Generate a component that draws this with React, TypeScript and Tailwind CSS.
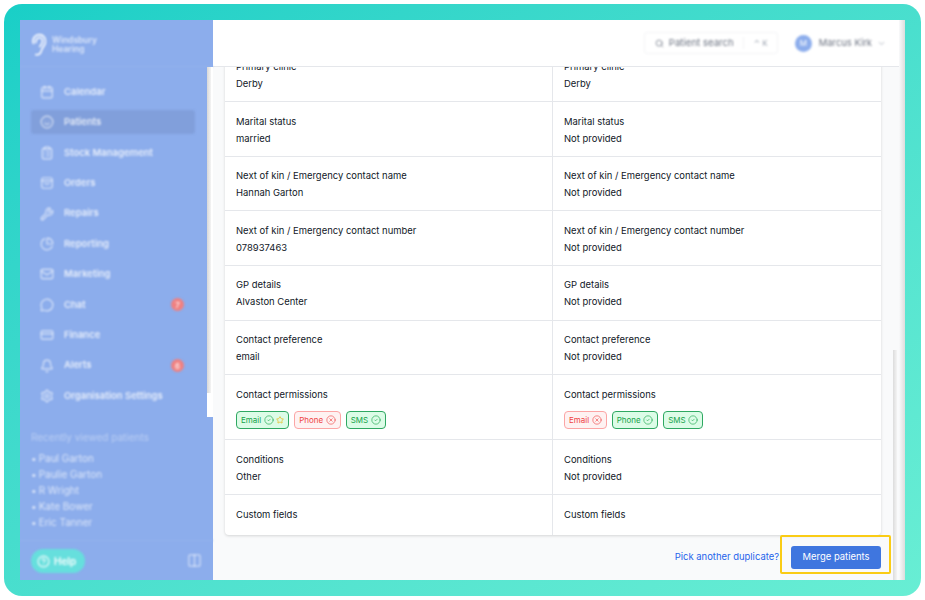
import { Calendar, Smile, ClipboardList, Wrench, PieChart, Mail, MessageCircle, CreditCard, Bell, Settings, Search, ChevronDown, CircleCheck, CircleX, Star, Columns2, CircleHelp } from 'lucide-react'
import type { ComponentType } from 'react'

type Perm = { label: string; ok: boolean; star?: boolean }
type Row = { label: string; left: string; right: string }
type IconProps = { className?: string; strokeWidth?: number }

function OrdersIcon({ className }: IconProps) {
  return (
    <svg viewBox="0 0 24 24" className={className} fill="none" stroke="currentColor" strokeWidth="2" strokeLinecap="round">
      <rect x="3" y="3" width="18" height="18" rx="3" />
      <path d="M3 8h18" />
      <path d="M8 12c1 2.500 7 2.500 8 0" />
    </svg>
  )
}

const nav: { label: string; icon: ComponentType<IconProps>; badge?: string; active?: boolean }[] = [
  { label: 'Calendar', icon: Calendar },
  { label: 'Patients', icon: Smile, active: true },
  { label: 'Stock Management', icon: ClipboardList },
  { label: 'Orders', icon: OrdersIcon },
  { label: 'Repairs', icon: Wrench },
  { label: 'Reporting', icon: PieChart },
  { label: 'Marketing', icon: Mail },
  { label: 'Chat', icon: MessageCircle, badge: '7' },
  { label: 'Finance', icon: CreditCard },
  { label: 'Alerts', icon: Bell, badge: '6' },
  { label: 'Organisation Settings', icon: Settings },
]

const recent = ['Paul Garton', 'Paulie Garton', 'R Wright', 'Kate Bower', 'Eric Tanner']

const rowsTop: Row[] = [
  { label: 'Primary clinic', left: 'Derby', right: 'Derby' },
  { label: 'Marital status', left: 'married', right: 'Not provided' },
  { label: 'Next of kin / Emergency contact name', left: 'Hannah Garton', right: 'Not provided' },
  { label: 'Next of kin / Emergency contact number', left: '078937463', right: 'Not provided' },
  { label: 'GP details', left: 'Alvaston Center', right: 'Not provided' },
  { label: 'Contact preference', left: 'email', right: 'Not provided' },
]

function Badge({ label, ok, star }: Perm) {
  return (
    <span className={`flex h-[18px] items-center gap-[2.500px] rounded-[4px] border px-[4px] text-[8px] ${ok ? 'border-[#2fa862] bg-[#dcfce7] text-[#16a34a]' : 'border-[#fca5a5] bg-[#fef2f2] text-[#ef4444]'}`}>
      {label}
      {ok ? <CircleCheck className="h-[10px] w-[10px]" strokeWidth={1.5} /> : <CircleX className="h-[10px] w-[10px]" strokeWidth={1.5} />}
      {star && <Star className="h-[8px] w-[8px] text-[#eab308]" strokeWidth={2} />}
    </span>
  )
}

function Cell({ label, value, border }: { label: string; value?: string; border?: boolean }) {
  return (
    <div className={`px-[11px] pt-[10.500px] ${border ? 'border-l border-[#e5e7eb]' : ''}`}>
      <p className="leading-[17px]">{label}</p>
      {value && <p className="leading-[17px]">{value}</p>}
    </div>
  )
}

export default function App() {
  return (
    <div className="h-[600px] w-[925px] bg-white p-1 font-['Inter',sans-serif]">
      <div className="h-[592px] overflow-hidden rounded-[18px] bg-gradient-to-br from-[#18cfc7] to-[#68eed4] p-4">
        <div className="flex h-[560px] overflow-hidden bg-white">
          <aside className="relative flex w-[193px] shrink-0 flex-col bg-[#8cadec] text-white">
            <div className="blur-[1px]">
              <div className="flex h-[47px] items-center gap-[5px] border-b border-[#93b3ee] pl-[11px] pt-1">
                <svg viewBox="0 0 20 28" className="h-[26px] w-[16px]" fill="none" stroke="currentColor" strokeWidth="2" strokeLinecap="round">
                  <path d="M3 12C1 5 6 1 10 1c5 0 9 4 8 10-.6 4-4 6-5 10-.7 3-3 6-7 5" />
                  <path d="M6 11c0-4 2-6 5-6 3 0 4 3 3 6-.5 2-2 3-3 5" />
                </svg>
                <span className="text-[8.500px] font-semibold leading-[9px] text-white/70">Windsbury<br />Hearing</span>
              </div>
              <nav className="mt-[13px] flex flex-col pl-[11px] pr-[18px]">
                {nav.map(item => {
                  const Icon = item.icon
                  return (
                    <div key={item.label} className={`mb-[6.400px] flex h-[24px] items-center rounded-[3px] pl-[9px] pr-[11px] ${item.active ? 'bg-[#819fdb]' : ''}`}>
                      <Icon className="mr-[10px] h-[14px] w-[14px] text-white/70" strokeWidth={2} />
                      <span className="text-[9.500px] font-semibold text-white/80">{item.label}</span>
                      {item.badge && <span className="ml-auto flex h-[13px] w-[13px] items-center justify-center rounded-full bg-[#f08080] text-[8px]">{item.badge}</span>}
                    </div>
                  )
                })}
              </nav>
              <div className="mt-[14.500px] px-[11px] text-[10px] text-white/70">
                <p className="mb-[5px] leading-[16px] text-white/40">Recently viewed patients</p>
                {recent.map(name => (
                  <p key={name} className="flex gap-[2px] leading-[16px]"><span>•</span>{name}</p>
                ))}
              </div>
            </div>
            <div className="mt-auto flex h-[40px] items-start justify-between border-t border-[#93b3ee] px-[11px] pt-[8px] blur-[1px]">
              <span className="flex h-[24px] w-[54px] items-center gap-1 rounded-full bg-[#66dfdd] pl-[6px] text-[10px] font-semibold">
                <CircleHelp className="h-[13px] w-[13px]" />Help
              </span>
              <Columns2 className="mt-[4px] h-[15px] w-[15px] text-white/60" />
            </div>
            {/* sidebar scrollbar sits over the blue */}
            <div className="absolute right-0 top-[47px] h-[350px] w-[6px] bg-white">
              <div className="h-[326px] w-[4px] bg-gradient-to-r from-[#d8d8d8] to-[#f4f4f4]" />
            </div>
          </aside>

          <div className="flex min-w-0 flex-1 flex-col">
            <header className="flex h-[47px] shrink-0 items-center justify-end border-b border-[#e5e7eb] bg-white pr-[13px]">
              <div className="flex items-center blur-[1px]">
                <div className="mr-[17px] flex h-[22px] w-[134px] items-center rounded-[3px] border border-[#f3f4f6] pl-[10px] text-[9.600px] text-[#9ca3af]">
                  <Search className="mr-[5px] h-[9px] w-[9px] text-[#6b7280]" />
                  <span className="text-[#6b7280]">Patient search</span>
                  <span className="ml-[9px] border-l border-[#f3f4f6] pl-[10px] text-[8px]">⌃ K</span>
                </div>
                <span className="mr-[7px] flex h-[17px] w-[17px] items-center justify-center rounded-full bg-[#8cadec] text-[8px] text-white">M</span>
                <span className="mr-[5px] text-[9.400px] text-[#6b7280]">Marcus Kirk</span>
                <ChevronDown className="h-[9px] w-[9px] text-[#9ca3af]" />
              </div>
            </header>

            <div className="flex min-h-0 flex-1 bg-[#f9fafb]">
              <main className="min-w-0 flex-1 overflow-hidden pl-[12px] pr-[12px] text-[9.450px] text-[#111827]">
                <div className="-mt-[19.400px] overflow-hidden rounded-b-[4px] bg-white shadow-[0_1px_3px_rgba(0,0,0,0.15)]">
                  {rowsTop.map(row => (
                    <div key={row.label} className="grid h-[54.600px] grid-cols-[327px_1fr] border-b border-[#e5e7eb]">
                      <Cell label={row.label} value={row.left} />
                      <Cell label={row.label} value={row.right} border />
                    </div>
                  ))}
                  <div className="grid h-[65px] grid-cols-[327px_1fr] border-b border-[#e5e7eb]">
                    <div className="px-[11px] pt-[10.500px]">
                      <p className="mb-[8.500px] leading-[17px]">Contact permissions</p>
                      <div className="flex gap-[5px]">
                        <Badge label="Email" ok star />
                        <Badge label="Phone" ok={false} />
                        <Badge label="SMS" ok />
                      </div>
                    </div>
                    <div className="border-l border-[#e5e7eb] px-[11px] pt-[10.500px]">
                      <p className="mb-[8.500px] leading-[17px]">Contact permissions</p>
                      <div className="flex gap-[5px]">
                        <Badge label="Email" ok={false} />
                        <Badge label="Phone" ok />
                        <Badge label="SMS" ok />
                      </div>
                    </div>
                  </div>
                  <div className="grid h-[55px] grid-cols-[327px_1fr] border-b border-[#e5e7eb]">
                    <Cell label="Conditions" value="Other" />
                    <Cell label="Conditions" value="Not provided" border />
                  </div>
                  <div className="grid h-[40px] grid-cols-[327px_1fr]">
                    <Cell label="Custom fields" />
                    <Cell label="Custom fields" border />
                  </div>
                </div>
                <div className="relative mt-[10.500px] flex items-center justify-end">
                  <span className="mr-[12px] text-[#2563eb]">Pick another duplicate?</span>
                  <button className="flex h-[23px] w-[90px] items-center justify-center rounded-[3px] bg-[#3f76df] text-[9.450px] text-white">Merge patients</button>
                  <span className="absolute -right-[10px] -top-[11px] h-[39px] w-[111px] rounded-[2px] border-2 border-[#facc15]" />
                </div>
              </main>
              <div className="relative w-[6px] shrink-0">
                <div className="absolute bottom-0 left-0 top-[283px] w-[4px] bg-gradient-to-r from-[#dcdcdc] to-[#f4f4f4]" />
              </div>
            </div>
          </div>
          <div className="w-[6px] shrink-0 bg-gradient-to-r from-[#f9fafb] to-[#dddddd]" />
        </div>
      </div>
    </div>
  )
}
